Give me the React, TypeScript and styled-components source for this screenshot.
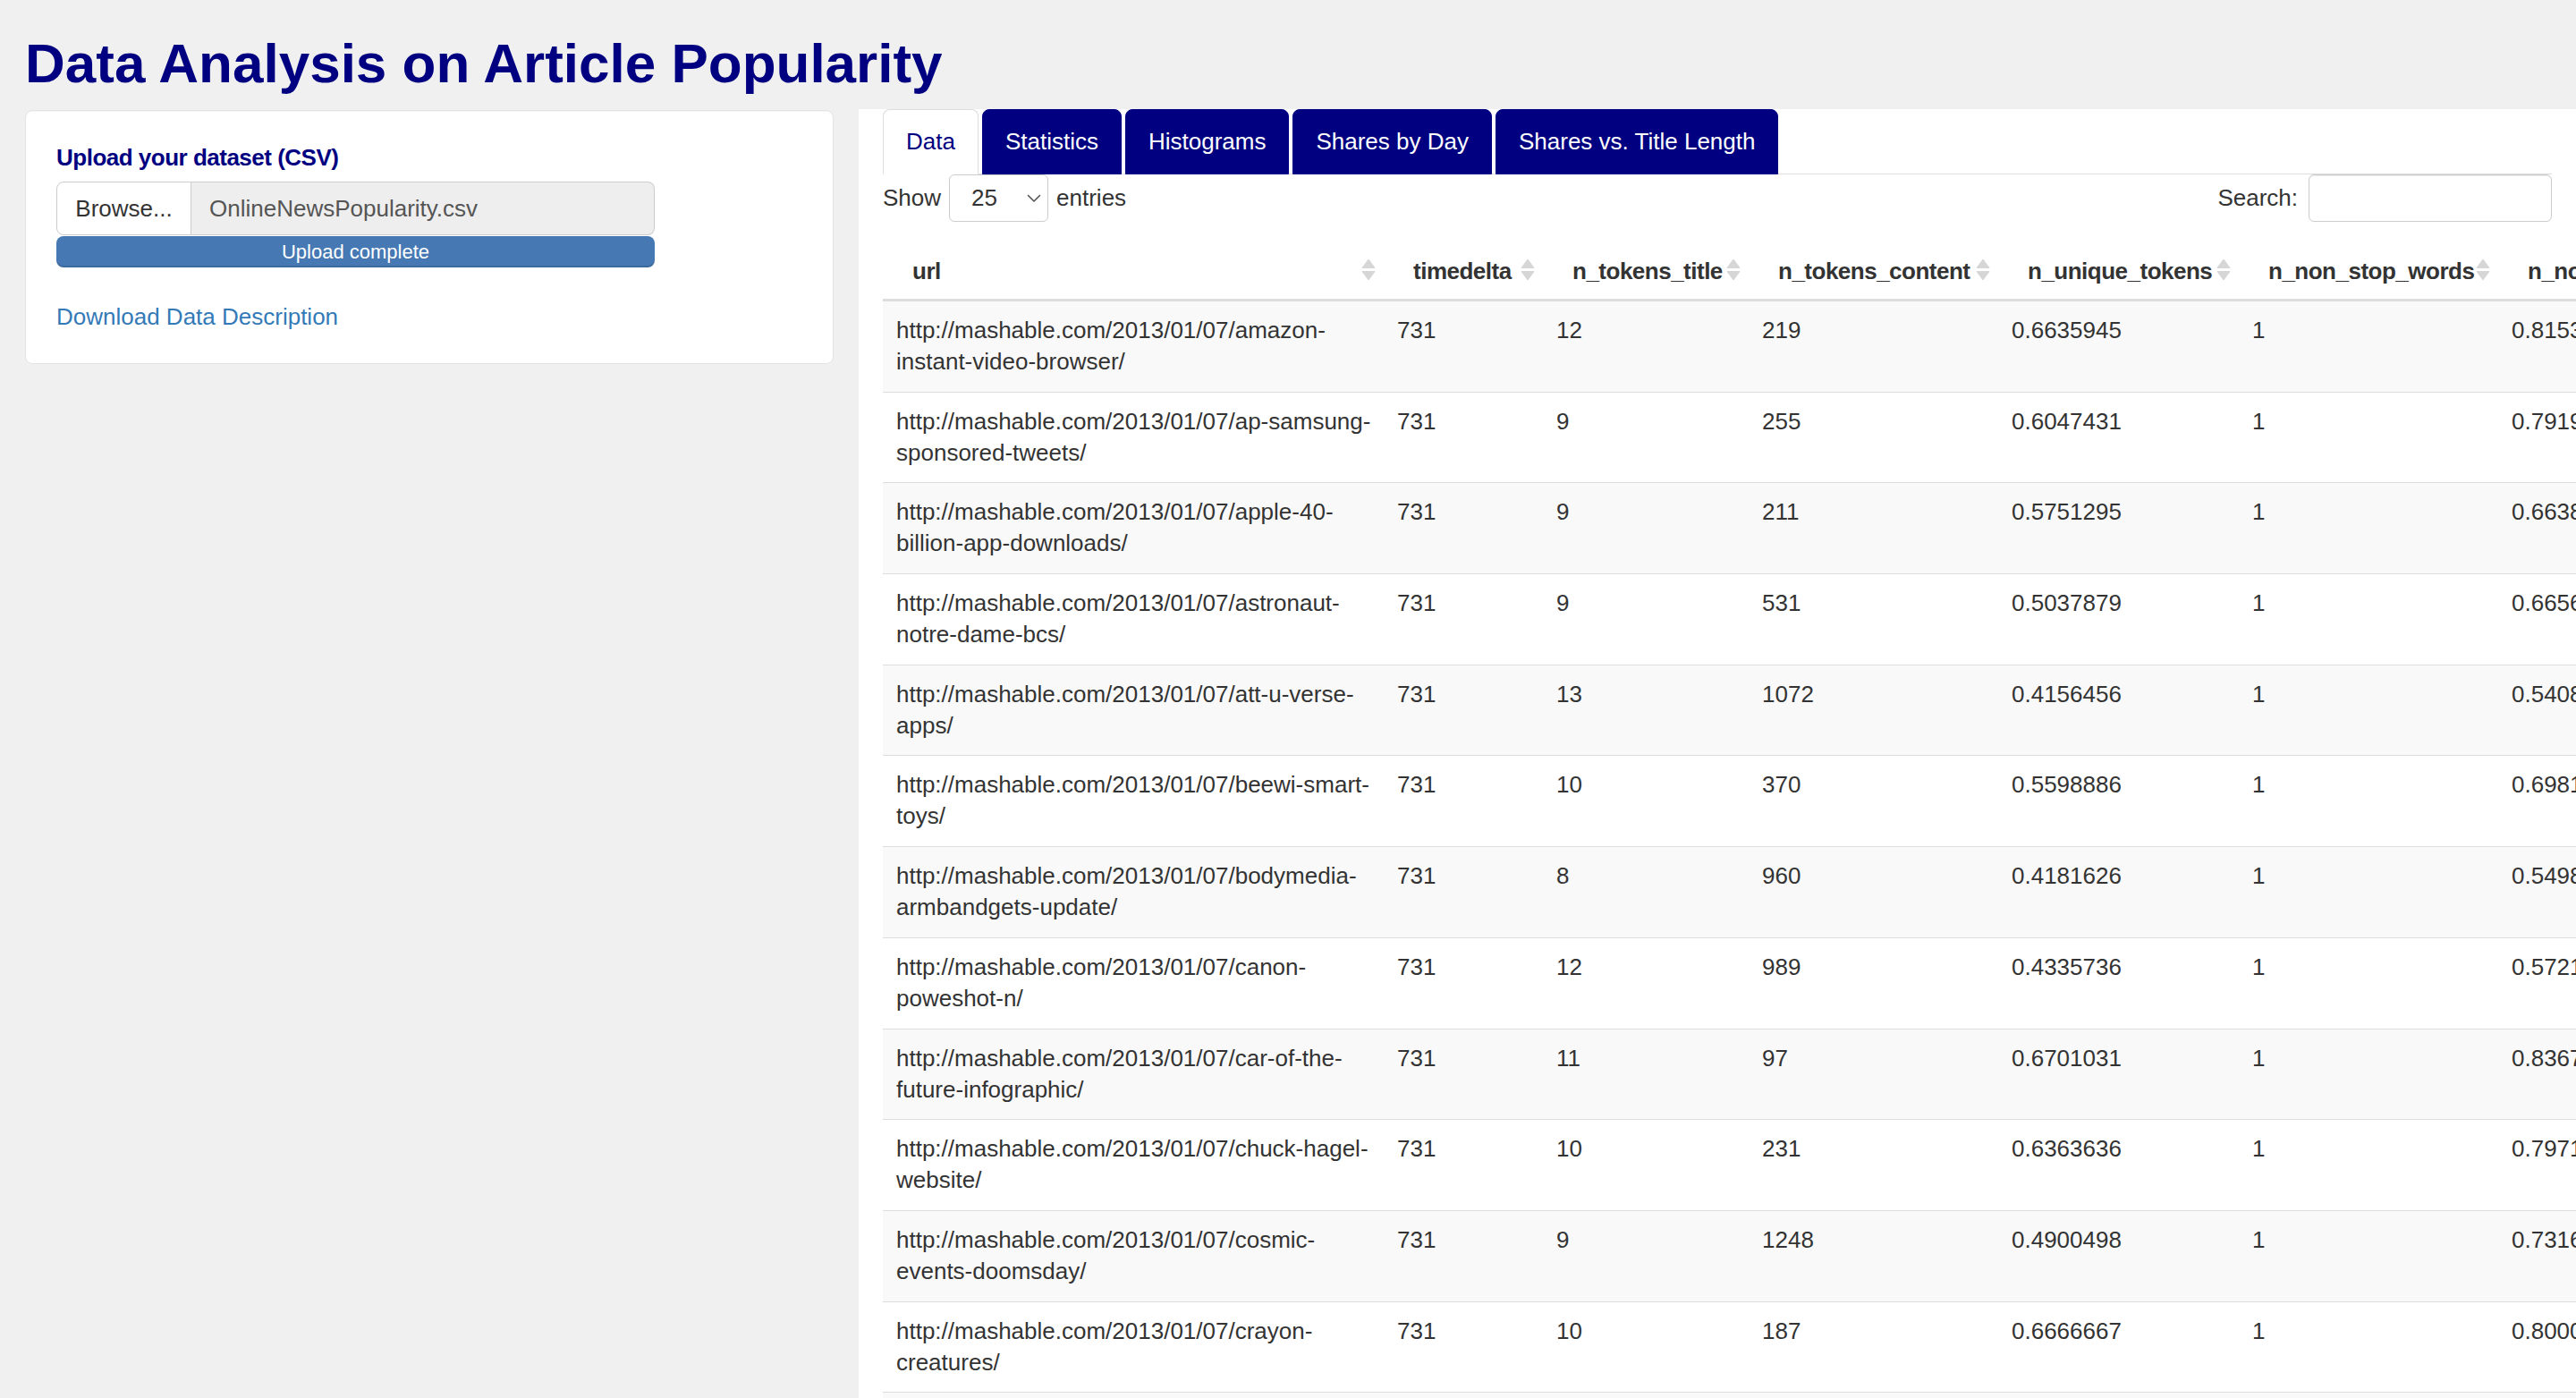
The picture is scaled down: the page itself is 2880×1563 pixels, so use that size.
import React from "react";
import styled, { createGlobalStyle } from "styled-components";

const GlobalStyle = createGlobalStyle`
  html, body {
    margin: 0;
    padding: 0;
    overflow: hidden;
    background: #f0f0f0;
  }
  body {
    font-family: "Liberation Sans", Arial, Helvetica, sans-serif;
    font-size: 26px;
    color: #333333;
  }
  * { box-sizing: border-box; }
`;

const NAVY = "#000080";

const Page = styled.div`
  padding-left: 28px;
  width: 2880px;
  height: 1563px;
  display: flex;
  flex-direction: column;
`;

const Title = styled.h1`
  margin: 37px 0 17px;
  font-size: 62px;
  line-height: 68px;
  font-weight: 700;
  color: ${NAVY};
`;

const Layout = styled.div`
  flex: 1;
  display: flex;
  align-items: flex-start;
  gap: 28px;
  min-height: 0;
`;

const Sidebar = styled.aside`
  width: 904px;
  margin-top: 1px;
  background: #ffffff;
  border: 1px solid #e3e3e3;
  border-radius: 8px;
  padding: 34px 34px 33px;
  box-shadow: inset 0 1px 1px rgba(0, 0, 0, 0.04);
`;

const FieldLabel = styled.label`
  display: block;
  font-weight: 700;
  color: ${NAVY};
  line-height: 37px;
  margin-bottom: 8px;
  letter-spacing: -0.5px;
`;

const FileGroup = styled.div`
  display: flex;
  width: 669px;
  height: 60px;
`;

const BrowseButton = styled.span`
  width: 151px;
  display: flex;
  align-items: center;
  justify-content: center;
  background: #ffffff;
  border: 1px solid #cccccc;
  border-radius: 8px 0 0 8px;
  color: #333333;
`;

const FileName = styled.span`
  flex: 1;
  display: flex;
  align-items: center;
  padding-left: 20px;
  background: #eeeeee;
  border: 1px solid #cccccc;
  border-left: none;
  border-radius: 0 8px 8px 0;
  color: #555555;
`;

const ProgressBar = styled.div`
  width: 669px;
  height: 35px;
  margin-top: 1px;
  background: #4679b3;
  border-radius: 8px;
  color: #ffffff;
  font-size: 22px;
  line-height: 35px;
  text-align: center;
  box-shadow: inset 0 -2px 0 rgba(0, 0, 0, 0.12);
`;

const DownloadLink = styled.a`
  display: block;
  margin-top: 36.5px;
  line-height: 37px;
  color: #337ab7;
  text-decoration: none;
`;

const Main = styled.main`
  flex: 1;
  min-width: 0;
  align-self: stretch;
  background: #ffffff;
  padding: 0 27px;
`;

const TabBar = styled.ul`
  display: flex;
  margin: 0;
  padding: 0;
  list-style: none;
  border-bottom: 1px solid #dddddd;
`;

const Tab = styled.li<{ $active?: boolean }>`
  margin-right: 4px;
  margin-bottom: -1px;
  padding: 17px 25px;
  line-height: 37px;
  border: 1px solid ${(p) => (p.$active ? "#dddddd" : NAVY)};
  border-bottom-color: ${(p) => (p.$active ? "transparent" : NAVY)};
  border-radius: 8px 8px 0 0;
  background: ${(p) => (p.$active ? "#ffffff" : NAVY)};
  color: ${(p) => (p.$active ? NAVY : "#ffffff")};
  white-space: nowrap;
`;

const Controls = styled.div`
  display: flex;
  justify-content: space-between;
  align-items: center;
  height: 53px;
`;

const ControlGroup = styled.div<{ $gap: number }>`
  display: flex;
  align-items: center;
  gap: ${(p) => p.$gap}px;
`;

const SelectBox = styled.div`
  width: 111px;
  height: 53px;
  display: flex;
  align-items: center;
  justify-content: space-between;
  padding: 0 7px 0 24px;
  border: 1px solid #cccccc;
  border-radius: 6px;
  background: #ffffff;
  color: #333333;
`;

const SearchInput = styled.div`
  width: 272px;
  height: 53px;
  border: 1px solid #cccccc;
  border-radius: 6px;
  background: #ffffff;
  box-shadow: inset 0 1px 1px rgba(0, 0, 0, 0.075);
`;

const Table = styled.table`
  margin-top: 12px;
  border-collapse: collapse;
  table-layout: fixed;
  width: 2206px;
`;

const HeadCell = styled.th<{ $w: number }>`
  position: relative;
  width: ${(p) => p.$w}px;
  padding: 24.5px 30px 12.5px 33px;
  line-height: 37px;
  text-align: left;
  font-weight: 700;
  color: #333333;
  letter-spacing: -0.5px;
  white-space: nowrap;
  border-bottom: 3px solid #dddddd;
`;

const SortIcon = styled.svg`
  position: absolute;
  right: 9px;
  top: 29px;
  width: 16px;
  height: 25px;
`;

const Row = styled.tr<{ $striped: boolean }>`
  background: ${(p) => (p.$striped ? "#f9f9f9" : "#ffffff")};
`;

const Cell = styled.td`
  padding: 15px 10px 15.7px 15px;
  line-height: 35px;
  vertical-align: top;
  color: #333333;
  border-bottom: 1px solid #dddddd;
  overflow: hidden;
  white-space: normal;
`;

const Sort = () => (
  <SortIcon viewBox="0 0 16 25">
    <path
      d="M8 1 L15 10.5 H1 Z"
      fill="#d6d6d6"
      stroke="#d6d6d6"
      strokeWidth="1"
      strokeLinejoin="round"
    />
    <path
      d="M8 24 L15 14.5 H1 Z"
      fill="#d6d6d6"
      stroke="#d6d6d6"
      strokeWidth="1"
      strokeLinejoin="round"
    />
  </SortIcon>
);

const Chevron = () => (
  <svg width="16" height="10" viewBox="0 0 16 10">
    <polyline
      points="1.5,1.5 8,8 14.5,1.5"
      fill="none"
      stroke="#555555"
      strokeWidth="1.6"
      strokeLinecap="round"
      strokeLinejoin="round"
    />
  </svg>
);

const columns: { name: string; w: number }[] = [
  { name: "url", w: 560 },
  { name: "timedelta", w: 178 },
  { name: "n_tokens_title", w: 230 },
  { name: "n_tokens_content", w: 279 },
  { name: "n_unique_tokens", w: 269 },
  { name: "n_non_stop_words", w: 290 },
  { name: "n_non_stop_unique_tokens", w: 400 },
];

const P = "http://mashable.com/2013/01/07/";

const rows: string[][] = [
  [P + "amazon-instant-video-browser/", "731", "12", "219", "0.6635945", "1", "0.8153846"],
  [P + "ap-samsung-sponsored-tweets/", "731", "9", "255", "0.6047431", "1", "0.7919463"],
  [P + "apple-40-billion-app-downloads/", "731", "9", "211", "0.5751295", "1", "0.6638655"],
  [P + "astronaut-notre-dame-bcs/", "731", "9", "531", "0.5037879", "1", "0.6656347"],
  [P + "att-u-verse-apps/", "731", "13", "1072", "0.4156456", "1", "0.5408022"],
  [P + "beewi-smart-toys/", "731", "10", "370", "0.5598886", "1", "0.6981982"],
  [P + "bodymedia-armbandgets-update/", "731", "8", "960", "0.4181626", "1", "0.5498339"],
  [P + "canon-poweshot-n/", "731", "12", "989", "0.4335736", "1", "0.5721078"],
  [P + "car-of-the-future-infographic/", "731", "11", "97", "0.6701031", "1", "0.8367347"],
  [P + "chuck-hagel-website/", "731", "10", "231", "0.6363636", "1", "0.7971014"],
  [P + "cosmic-events-doomsday/", "731", "9", "1248", "0.4900498", "1", "0.7316176"],
  [P + "crayon-creatures/", "731", "10", "187", "0.6666667", "1", "0.8000000"],
  [P + "creature-cups/", "731", "9", "274", "0.6094891", "1", "0.7073171"],
];

const tabs = ["Data", "Statistics", "Histograms", "Shares by Day", "Shares vs. Title Length"];

export default function App() {
  return (
    <>
      <GlobalStyle />
      <Page>
        <Title>Data Analysis on Article Popularity</Title>
        <Layout>
          <Sidebar>
            <FieldLabel>Upload your dataset (CSV)</FieldLabel>
            <FileGroup>
              <BrowseButton>Browse...</BrowseButton>
              <FileName>OnlineNewsPopularity.csv</FileName>
            </FileGroup>
            <ProgressBar>Upload complete</ProgressBar>
            <DownloadLink href="#">Download Data Description</DownloadLink>
          </Sidebar>
          <Main>
            <TabBar>
              {tabs.map((t, i) => (
                <Tab key={t} $active={i === 0}>
                  {t}
                </Tab>
              ))}
            </TabBar>
            <Controls>
              <ControlGroup $gap={9}>
                <span>Show</span>
                <SelectBox>
                  <span>25</span>
                  <Chevron />
                </SelectBox>
                <span>entries</span>
              </ControlGroup>
              <ControlGroup $gap={12}>
                <span>Search:</span>
                <SearchInput />
              </ControlGroup>
            </Controls>
            <Table>
              <thead>
                <tr>
                  {columns.map((c) => (
                    <HeadCell key={c.name} $w={c.w}>
                      {c.name}
                      <Sort />
                    </HeadCell>
                  ))}
                </tr>
              </thead>
              <tbody>
                {rows.map((r, i) => (
                  <Row key={r[0]} $striped={i % 2 === 0}>
                    {r.map((v, j) => (
                      <Cell key={j}>{v}</Cell>
                    ))}
                  </Row>
                ))}
              </tbody>
            </Table>
          </Main>
        </Layout>
      </Page>
    </>
  );
}
